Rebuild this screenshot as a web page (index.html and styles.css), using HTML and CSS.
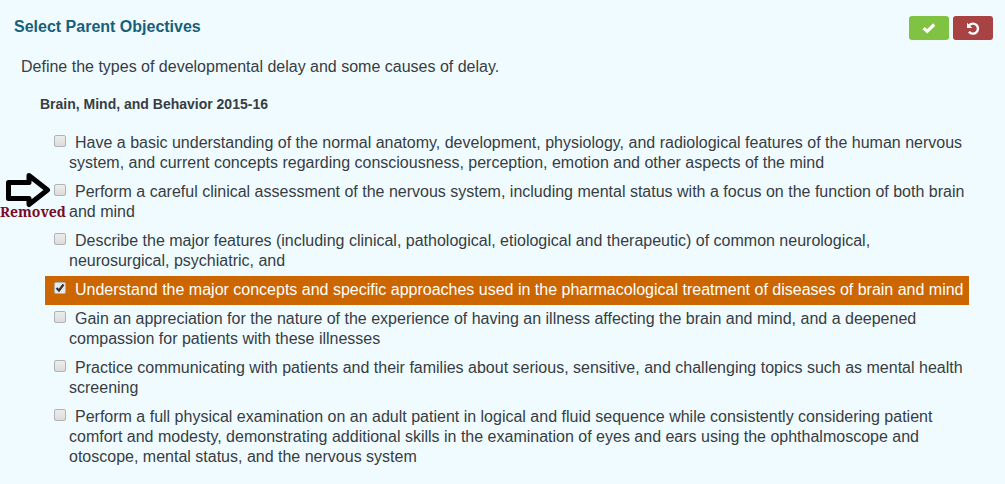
FILE: index.html
```html
<!DOCTYPE html>
<html lang="en">
<head>
<meta charset="utf-8">
<title>Select Parent Objectives</title>
<link rel="stylesheet" href="styles.css">
</head>
<body>
<main class="manager">
  <header class="manager-header">
    <h1 class="title">Select Parent Objectives</h1>
    <div class="actions">
      <button class="btn btn-save" type="button" aria-label="Save">
        <svg width="14" height="12" viewBox="0 0 14 12"><path d="M1.700 6.100 5.200 9.400 12.200 2.500" fill="none" stroke="#fff" stroke-width="3.200"/></svg>
      </button>
      <button class="btn btn-cancel" type="button" aria-label="Cancel">
        <svg width="14" height="13" viewBox="0 0 14 13"><path d="M3 3.600A5 5 0 1 1 3 9.700" fill="none" stroke="#fff" stroke-width="2.400"/><path d="M1 .7V6H6.300Z" fill="#fff"/></svg>
      </button>
    </div>
  </header>
  <p class="objective">Define the types of developmental delay and some causes of delay.</p>
  <section class="group">
    <h2 class="group-title">Brain, Mind, and Behavior 2015-16</h2>
    <ul class="parents">
      <li class="parent"><input class="check" type="checkbox" id="p1"><label for="p1">Have a basic understanding of the normal anatomy, development, physiology, and radiological features of the human nervous system, and current concepts regarding consciousness, perception, emotion and other aspects of the mind</label></li>
      <li class="parent"><input class="check" type="checkbox" id="p2"><label for="p2">Perform a careful clinical assessment of the nervous system, including mental status with a focus on the function of both brain and mind</label>
        <div class="callout">
          <svg class="arrow" width="46" height="36" viewBox="0 0 46 36"><path d="M2.500 10.500H23V3.500L41.500 18 23 32.500V26.500H2.500Z" fill="none" stroke="#000" stroke-width="5" stroke-linejoin="round"/></svg>
          <span class="callout-text">Removed</span>
        </div>
      </li>
      <li class="parent"><input class="check" type="checkbox" id="p3"><label for="p3">Describe the major features (including clinical, pathological, etiological and therapeutic) of common neurological, neurosurgical, psychiatric, and</label></li>
      <li class="parent selected"><input class="check" type="checkbox" id="p4" checked><label for="p4">Understand the major concepts and specific approaches used in the pharmacological treatment of diseases of brain and mind</label></li>
      <li class="parent"><input class="check" type="checkbox" id="p5"><label for="p5">Gain an appreciation for the nature of the experience of having an illness affecting the brain and mind, and a deepened compassion for patients with these illnesses</label></li>
      <li class="parent"><input class="check" type="checkbox" id="p6"><label for="p6">Practice communicating with patients and their families about serious, sensitive, and challenging topics such as mental health screening</label></li>
      <li class="parent"><input class="check" type="checkbox" id="p7"><label for="p7">Perform a full physical examination on an adult patient in logical and fluid sequence while consistently considering patient comfort and modesty, demonstrating additional skills in the examination of eyes and ears using the ophthalmoscope and otoscope, mental status, and the nervous system</label></li>
    </ul>
  </section>
</main>
</body>
</html>
```
FILE: styles.css
```css
* {
  box-sizing: border-box;
}

body {
  margin: 0;
  background: #f0fbff;
  color: #373d42;
  font: 16px/20px "Liberation Sans", Arial, sans-serif;
}

.manager {
  padding: 16px 12px 12px 14px;
}

.manager-header {
  display: flex;
  justify-content: space-between;
  align-items: flex-start;
}

.title {
  margin: 0;
  font-size: 16px;
  line-height: 22px;
  color: #17607a;
}

.actions {
  display: flex;
  gap: 4px;
}

.btn {
  display: flex;
  align-items: center;
  justify-content: center;
  height: 24px;
  padding: 0 13px;
  border: 0;
  border-radius: 3px;
}

.btn-save {
  background: #80c342;
}

.btn-cancel {
  background: #a94343;
}

.objective {
  margin: 17px 0 0 7px;
}

.group {
  padding: 17px 24px 0 26px;
}

.group-title {
  margin: 0;
  font-size: 14px;
  line-height: 20px;
}

.parents {
  margin: 15px 0 0 5px;
  padding: 0;
  list-style: none;
}

.parent {
  position: relative;
  padding: 4px 4px 5px 24px;
  text-indent: -15px;
}

.selected {
  background: #cc6600;
  color: #fff;
}

.check {
  appearance: none;
  width: 12px;
  height: 12px;
  margin: 0 9px 0 0;
  vertical-align: 1px;
  border: 1px solid #b0b2b4;
  border-radius: 2px;
  background: linear-gradient(#ededed, #dcdcdc);
}

.check:checked {
  background: #e8e8e8 url("data:image/svg+xml,%3Csvg xmlns='http://www.w3.org/2000/svg' viewBox='0 0 10 10'%3E%3Cpath d='M1.500 5 4 7.500 8.500 1.500' fill='none' stroke='%23333' stroke-width='2.200'/%3E%3C/svg%3E");
}

.callout {
  position: absolute;
  left: -45px;
  top: -6px;
  text-indent: 0;
}

.arrow {
  position: absolute;
  left: 6px;
  top: 0;
}

.callout-text {
  position: absolute;
  left: 0;
  top: 30px;
  color: #7a0a26;
  font: bold 14px/20px "Noto Serif", "DejaVu Serif", serif;
}
```
